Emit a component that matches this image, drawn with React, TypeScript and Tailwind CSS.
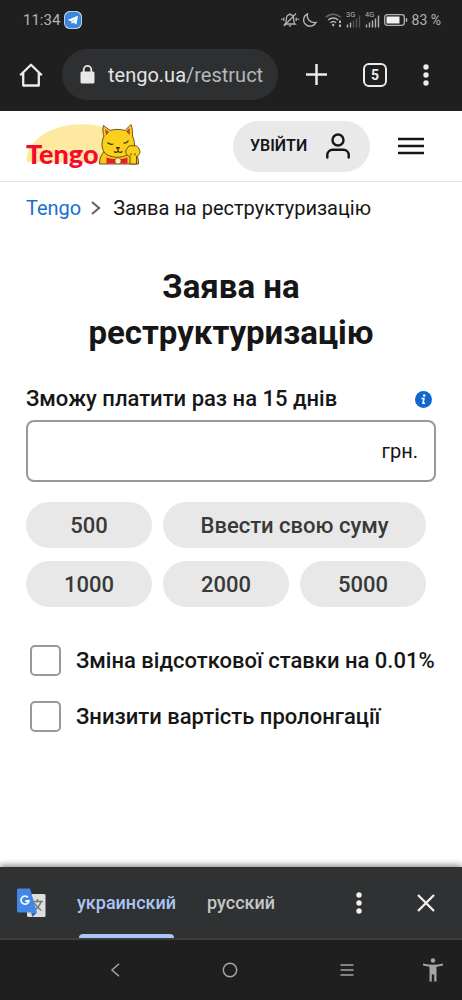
import { useState } from "react";

const AMOUNTS = ["500", "", "1000", "2000", "5000"];

const OPTIONS = [
  { id: "rate", label: "Зміна відсоткової ставки на 0.01%" },
  { id: "prolongation", label: "Знизити вартість пролонгації" },
];

function StatusBar() {
  return (
    <div className="flex h-10 items-center justify-between pl-[23px] pr-[21px] text-[#b4b4b4]">
      <div className="flex items-center gap-1">
        <span className="text-[15px]">11:34</span>
        <svg width="18" height="18" viewBox="0 0 18 18">
          <rect width="18" height="18" rx="6" fill="#d9e8fa" />
          <rect x="0.7" y="0.7" width="16.6" height="16.6" rx="6" fill="#3c86dc" />
          <path d="M3.5 9 14 4.8 12.4 13.6 9.3 11.4 7.7 13 7.4 10.3Z" fill="#fff" />
          <path d="M7.4 10.3 12 6.8 8.5 10.9" fill="#9dc3ef" />
        </svg>
      </div>
      <div className="flex items-center gap-[3px]">
        <svg width="18" height="16" viewBox="0 0 18 16" fill="none" stroke="currentColor" strokeWidth="1.3">
          <path d="M4 12h10c-1.200-1-1.400-2.200-1.400-5C12.600 4.300 11 2.700 9 2.700S5.400 4.300 5.400 7c0 2.800-.2 4-1.400 5Z" />
          <path d="M7.800 13.800h2.400M9 1.200v1.500M15 1.500 3 14M2.800 5.500v3.500M.8 6.500v1.500M15.200 5.500v3.500M17.200 6.500v1.500" />
        </svg>
        <svg width="16" height="16" viewBox="0 0 16 16" fill="none" stroke="currentColor" strokeWidth="1.3">
          <path d="M5.500 1.800A6.500 6.500 0 1 0 14 10.500 7.200 7.200 0 0 1 5.500 1.800Z" />
        </svg>
        <svg className="ml-1" width="18" height="16" viewBox="0 0 18 16" fill="none" stroke="currentColor" strokeWidth="1.5">
          <path d="M1 5.200a10.500 10.500 0 0 1 14.500 0" opacity=".5" />
          <path d="M3.200 8a7.300 7.300 0 0 1 10 0M5.500 10.800a4 4 0 0 1 5.500 0" />
          <circle cx="8.2" cy="13" r="1.2" fill="currentColor" stroke="none" />
          <path d="M15 8.500v2.500M15 12.500v2.500" strokeWidth="2" />
        </svg>
        <SignalIcon label="3G" dim />
        <SignalIcon label="4G" />
        <div className="flex items-center gap-1">
          <svg width="24" height="12" viewBox="0 0 24 12" fill="none" stroke="currentColor">
            <rect x="0.7" y="0.7" width="19.6" height="10.6" rx="2.5" strokeWidth="1.3" />
            <rect x="2.5" y="2.5" width="13" height="7" fill="#f0f0f0" stroke="none" />
            <path d="M22.500 4.200v3.600" strokeWidth="1.5" />
          </svg>
          <span className="text-sm">83 %</span>
        </div>
      </div>
    </div>
  );
}

function SignalIcon({ label, dim = false }: { label: string; dim?: boolean }) {
  return (
    <svg width="16" height="18" viewBox="0 0 16 18" stroke="currentColor" strokeWidth="1.4">
      <text x="0" y="6" fontSize="7.5" fill="currentColor" stroke="none">{label}</text>
      <path d="M1.500 13.500v3M4.500 11.500v5" />
      <path d="M7.500 9.500v7M10.500 7.500v9M13.500 4.500v12" opacity={dim ? 0.35 : 1} />
    </svg>
  );
}

function DotsIcon() {
  return (
    <svg width="6" height="22" viewBox="0 0 6 22" fill="currentColor">
      <circle cx="3" cy="3" r="2.7" />
      <circle cx="3" cy="11" r="2.7" />
      <circle cx="3" cy="19" r="2.7" />
    </svg>
  );
}

function BrowserBar() {
  return (
    <div className="flex h-[71px] items-center pb-2 pl-[19px] pr-[33px] pt-1.5 text-[#ececec]">
      <button type="button" aria-label="Home" className="shrink-0">
        <svg width="24" height="24" viewBox="0 0 24 24" fill="none" stroke="currentColor" strokeWidth="2.3">
          <path d="M1.200 12.300 12 1.700 22.800 12.300M4.200 10v12.500h15.600V10" strokeLinejoin="round" />
        </svg>
      </button>
      <div className="ml-[19px] flex h-[51px] min-w-0 flex-1 items-center gap-[13px] rounded-full bg-[#2d2f31] pl-[18px] pr-[10px]">
        <svg className="shrink-0" width="15" height="20" viewBox="0 0 15 20">
          <rect x="0.5" y="6.5" width="14" height="12" rx="1.5" fill="#e8e8e8" />
          <path d="M3.700 7V4.700a3.800 3.800 0 0 1 7.600 0V7" fill="none" stroke="#e8e8e8" strokeWidth="1.8" />
        </svg>
        <span className="overflow-hidden whitespace-nowrap text-xl text-[#e3e3e3]">
          tengo.ua<span className="text-[#b6b8ba]">/restruct</span>
        </span>
      </div>
      <button type="button" aria-label="New tab" className="ml-7 shrink-0">
        <svg width="21" height="21" viewBox="0 0 21 21" stroke="currentColor" strokeWidth="2.5">
          <path d="M10.500 0v21M0 10.500h21" />
        </svg>
      </button>
      <button
        type="button"
        className="ml-9 flex size-6 shrink-0 items-center justify-center rounded-md border-2 border-current text-sm font-bold"
      >
        5
      </button>
      <button type="button" aria-label="Menu" className="ml-9 shrink-0">
        <DotsIcon />
      </button>
    </div>
  );
}

function Logo() {
  return (
    <svg width="118" height="50" viewBox="0 0 118 50">
      <path d="M1 41C-2 28 14 8 44 4 68 1 88 7 98 20V36L80 42Z" fill="#fdeaa0" />
      <g stroke="#5a4212" strokeWidth=".9" strokeLinejoin="round">
        <path d="M73.500 43c0-6 2-10 6-14h28c4 4 5 9 5 14Z" fill="#f8c916" />
        <path d="M77.500 4.500 84 9.500c4-1.500 11-1.500 15 0L105 3.500c1.500 4 1.700 8 1.500 11.500 4 9 2 16-5 19-7 3-14 3-20 0-6-3-7-12-3.500-19C76.800 12 76.500 8 77.500 4.500Z" fill="#fbd01c" />
        <path d="M79 8 83 11l-3 3.500ZM103.500 7 100 10.500l4 3.500Z" fill="#b8452a" stroke="none" />
        <path d="M80.500 36.500c7 2 15 2 21 0v6h-21Z" fill="#e51e2b" stroke="none" />
        <circle cx="92" cy="40" r="3" fill="#fff1b5" strokeWidth=".5" />
        <path d="M104 43v-7.500c-4-1-5.500-5-3-8 1-2.500 4-3.500 6-2.500 3-1 5 .5 6 3 2 3 .5 6.500-2.500 7.500V43Z" fill="#fbd01c" />
        <path d="M105 32v2.500m4-2.500v2.500" fill="none" />
        <path d="M81.500 21.500q2.500 2.500 6 1.500M102.500 19.500q-1.500 3-5 2.500" fill="none" strokeWidth="1.2" stroke="#3c2c10" />
        <path d="M90.500 26.500h3L92 28Zm1.500 1.500v2m-4 .5c1.500 1.300 3 1.300 4-.5 1 1.800 3 1.800 4.500.5" fill="none" strokeWidth="1.1" stroke="#3c2c10" />
      </g>
      <text x="0" y="43" fontSize="27" fontWeight="900" fill="#f5092f" className="font-[Lato,sans-serif]">
        Tengo
      </text>
    </svg>
  );
}

function SiteHeader() {
  return (
    <header className="flex h-[71px] items-center justify-between border-b border-[#e3e3e3] pl-[26px] pr-[38px]">
      <a href="#" aria-label="Tengo">
        <Logo />
      </a>
      <div className="flex items-center gap-7">
        <button
          type="button"
          className="flex h-[51px] w-[137px] items-center justify-between rounded-full bg-[#e9e9e9] pl-[17px] pr-5 text-base font-semibold text-[#161616]"
        >
          УВІЙТИ
          <svg width="24" height="26" viewBox="0 0 24 26" fill="none" stroke="currentColor" strokeWidth="2.4" strokeLinecap="round">
            <circle cx="12" cy="7" r="5.5" />
            <path d="M1.300 24.500v-2.500a5.300 5.300 0 0 1 5.300-5.300h10.800a5.300 5.300 0 0 1 5.300 5.300v2.500" />
          </svg>
        </button>
        <button type="button" aria-label="Меню">
          <svg width="26" height="18" viewBox="0 0 26 18" stroke="#161616" strokeWidth="2.3">
            <path d="M0 2h26M0 9h26M0 16h26" />
          </svg>
        </button>
      </div>
    </header>
  );
}

function RestructuringForm() {
  const [amount, setAmount] = useState("");
  const chip = "h-[46px] rounded-full bg-[#e8e8e8] text-[22px] font-medium text-[#393939]";

  return (
    <form className="mt-[29px]">
      <div className="flex items-center justify-between pr-1">
        <label htmlFor="amount" className="text-[22px] leading-7 font-medium">
          Зможу платити раз на 15 днів
        </label>
        <svg width="17" height="17" viewBox="0 0 17 17">
          <circle cx="8.5" cy="8.5" r="8.5" fill="#0e67d2" />
          <circle cx="9.2" cy="4.5" r="1.3" fill="#fff" />
          <path d="M6.500 7.500h2.400l-.9 4.700h2" fill="none" stroke="#fff" strokeWidth="1.6" />
        </svg>
      </div>
      <div className="mt-[7px] flex h-[62px] items-center rounded-lg border-2 border-[#999] px-4">
        <input
          id="amount"
          value={amount}
          onChange={(e) => setAmount(e.target.value)}
          className="h-full min-w-0 flex-1 text-xl outline-none"
        />
        <span className="text-xl">грн.</span>
      </div>

      <div className="mt-5 grid grid-cols-3 gap-x-[11px] gap-y-[13px] pr-[10px]">
        {AMOUNTS.map((a) =>
          a ? (
            <button key={a} type="button" onClick={() => setAmount(a)} className={chip}>
              {a}
            </button>
          ) : (
            <button key="custom" type="button" onClick={() => setAmount("")} className={`${chip} col-span-2`}>
              Ввести свою суму
            </button>
          )
        )}
      </div>

      <div className="mt-[37px] flex flex-col gap-[23px] pl-1">
        {OPTIONS.map((o) => (
          <label key={o.id} className="flex items-center gap-[15px] text-[22px] font-medium whitespace-nowrap">
            <input
              type="checkbox"
              className="size-[31px] shrink-0 appearance-none rounded-[5px] border-2 border-[#999] bg-white checked:bg-[#0e67d2]"
            />
            {o.label}
          </label>
        ))}
      </div>
    </form>
  );
}

function TranslateBar() {
  return (
    <div className="flex h-[73px] items-center border-b-2 border-[#3d3d3d] bg-[#303132] pl-4 pr-[27px] text-lg font-medium text-[#c4c6c8] shadow-[0_-2px_6px_rgba(0,0,0,0.45)]">
      <svg className="shrink-0" width="30" height="30" viewBox="0 0 30 30">
        <rect x="11" y="6" width="18.5" height="23" rx="1.5" fill="#dcdfdc" />
        <path d="M16 13.500h11M21.500 11v2.500M25 13.500c-1 4-4 7-7 9M18.500 15c2 4 4.500 6 7 7.500" fill="none" stroke="#70756f" strokeWidth="1.4" />
        <path d="M2.500.500H14l7 24H2.500A1.500 1.500 0 0 1 1 23V2A1.500 1.500 0 0 1 2.500.500Z" fill="#4387e6" />
        <path d="M15 24.500h6l-4.500 4.500Z" fill="#2c64bd" />
        <path d="M12 9.500a4 4 0 1 0 .900 3.500H9.300" fill="none" stroke="#f4f7fb" strokeWidth="1.8" />
      </svg>
      <button type="button" className="relative ml-[31px] h-full text-[#a8c7f6]">
        украинский
        <span className="absolute inset-x-[2px] bottom-0 h-1 rounded-t bg-[#a8c7f6]" />
      </button>
      <button type="button" className="ml-[31px]">русский</button>
      <button type="button" aria-label="Ещё" className="ml-auto text-[#f1f1f1]">
        <DotsIcon />
      </button>
      <button type="button" aria-label="Закрыть" className="ml-[55px] text-[#f1f1f1]">
        <svg width="18" height="18" viewBox="0 0 18 18" stroke="currentColor" strokeWidth="2.3">
          <path d="m1 1 16 16M17 1 1 17" />
        </svg>
      </button>
    </div>
  );
}

function NavBar() {
  return (
    <nav className="flex h-[60px] items-center bg-[#1f1f1f] pl-[110px] pr-[19px] text-[#a5a5a5]">
      <button type="button" aria-label="Назад">
        <svg width="10" height="14" viewBox="0 0 10 14" fill="none" stroke="currentColor" strokeWidth="1.5">
          <path d="M9 .700 2 7l7 6.300" />
        </svg>
      </button>
      <button type="button" aria-label="Домой" className="ml-auto">
        <svg width="16" height="16" viewBox="0 0 16 16" fill="none" stroke="currentColor" strokeWidth="1.5">
          <circle cx="8" cy="8" r="6.7" />
        </svg>
      </button>
      <button type="button" aria-label="Недавние" className="ml-auto">
        <svg width="14" height="14" viewBox="0 0 14 14" stroke="currentColor" strokeWidth="1.5">
          <path d="M.5 2h13M.5 7h13M.5 12h13" />
        </svg>
      </button>
      <button type="button" aria-label="Специальные возможности" className="ml-[69px]">
        <svg width="20" height="24" viewBox="0 0 20 24" fill="currentColor">
          <circle cx="10" cy="2.5" r="2.2" />
          <path d="M.2 5.500C6.500 7.200 13.500 7.200 19.800 5.500L20.200 7.500 13.500 8.800V23.500H11.200V16.500H8.800V23.500H6.500V8.800L-.2 7.500Z" />
        </svg>
      </button>
    </nav>
  );
}

export default function App() {
  return (
    <div className="flex min-h-screen flex-col bg-white font-[Roboto,'Noto_Sans',sans-serif] text-[#161616]">
      <div className="bg-[#1f1f1f]">
        <StatusBar />
        <BrowserBar />
      </div>
      <SiteHeader />
      <main className="flex-1 px-[26px] pt-3">
        <nav className="flex items-center gap-3 text-xl leading-7">
          <div className="flex items-center gap-[10px]">
            <a href="#" className="text-[#1a6fce]">Tengo</a>
            <svg width="10" height="14" viewBox="0 0 10 14" fill="none" stroke="#666" strokeWidth="2.2">
              <path d="m1 1 7 6-7 6" />
            </svg>
          </div>
          <span className="whitespace-nowrap">Заява на реструктуризацію</span>
        </nav>
        <h1 className="mt-[42px] text-center text-[33px] leading-[46px] font-bold">Заява на реструктуризацію</h1>
        <RestructuringForm />
      </main>
      <TranslateBar />
      <NavBar />
    </div>
  );
}
